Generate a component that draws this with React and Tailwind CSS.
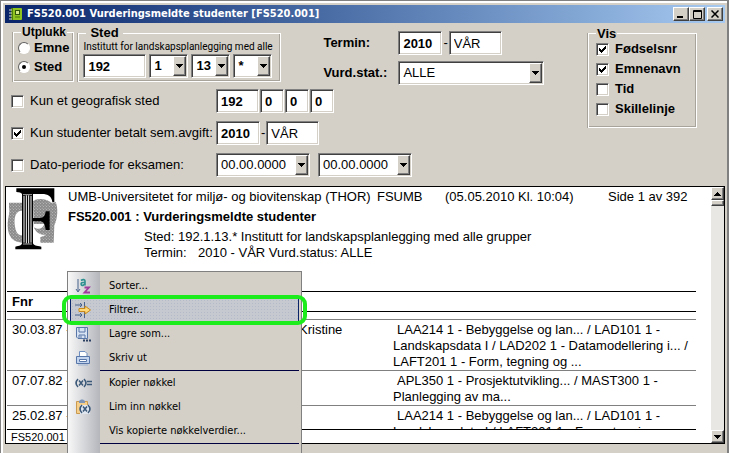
import React, { useState } from "react";

const sunken =
  "border border-t-[#808080] border-l-[#808080] border-r-white border-b-white bg-white shadow-[inset_1px_1px_0_#404040,inset_-1px_-1px_0_#d4d0c8]";
const raised =
  "border border-t-white border-l-white border-r-[#404040] border-b-[#404040] bg-[#d4d0c8] shadow-[inset_-1px_-1px_0_#808080]";
const group = "border border-white shadow-[-1px_0_0_#a8a49c,inset_-1px_-1px_0_#a8a49c]";

const rows = [
  {
    fnr: "30.03.87 -",
    name: "Kristine",
    subjects: [
      "LAA214 1 - Bebyggelse og lan... / LAD101 1 -",
      "Landskapsdata I / LAD202 1 - Datamodellering i... /",
      "LAFT201 1 - Form, tegning og ...",
    ],
  },
  {
    fnr: "07.07.82 -",
    name: "",
    subjects: [
      "APL350 1 - Prosjektutvikling... / MAST300 1 -",
      "Planlegging av ma...",
    ],
  },
  {
    fnr: "25.02.87 -",
    name: "",
    subjects: [
      "LAA214 1 - Bebyggelse og lan... / LAD101 1 -",
      "Landskapsdata I / LAFT201 1 - Form, tegning",
    ],
  },
];

const Arrow = ({ up }) => (
  <svg width="7" height="4" viewBox="0 0 7 4" shapeRendering="crispEdges">
    <path d={up ? "M0 4L3.5 0L7 4z" : "M0 0H7L3.5 4z"} fill="#000" />
  </svg>
);

const TextBox = ({ label, value, className }) => (
  <input
    type="text"
    aria-label={label}
    defaultValue={value}
    className={`h-6 px-1 ${sunken} ${className}`}
  />
);

const Select = ({ id, label, value, className }) => (
  <div className={`relative h-6 ${className}`}>
    <select
      id={id}
      aria-label={label}
      defaultValue={value}
      className={`h-full w-full appearance-none rounded-none px-1 ${sunken}`}
    >
      <option>{value}</option>
    </select>
    <span
      className={`pointer-events-none absolute top-[2px] right-[2px] bottom-[2px] flex w-[13px] items-center justify-center ${raised}`}
    >
      <Arrow />
    </span>
  </div>
);

const CheckBox = ({ label, checked, className }) => (
  <label className={`flex items-center gap-[6px] ${className || ""}`}>
    <span className="relative size-[13px] shrink-0">
      <input
        type="checkbox"
        defaultChecked={checked}
        className={`peer block size-[13px] appearance-none ${sunken}`}
      />
      <svg
        className="pointer-events-none absolute inset-0 hidden peer-checked:block"
        viewBox="0 0 13 13"
        shapeRendering="crispEdges"
      >
        <path d="M3 5L5 7L10 2V5L5 10L3 8z" fill="#000" />
      </svg>
    </span>
    {label}
  </label>
);

const Radio = ({ label, checked, onChange }) => (
  <label className="flex items-center gap-1 text-[13px] font-bold">
    <span className="relative size-3 shrink-0">
      <input
        type="radio"
        name="utplukk"
        checked={checked}
        onChange={onChange}
        className="peer block size-3 appearance-none rounded-full border border-t-[#606060] border-r-white border-b-white border-l-[#606060] bg-white"
      />
      <span className="pointer-events-none absolute top-1 left-1 hidden size-1 rounded-full bg-black peer-checked:block" />
    </span>
    {label}
  </label>
);

const BookIcon = () => (
  <svg width="14" height="14" viewBox="0 0 14 14">
    <rect x="2" y="1" width="11" height="12" rx="1" fill="#8fc31f" />
    <rect x="2" y="1" width="2" height="12" fill="#4d7d10" />
    <rect x="6" y="3" width="5" height="5" fill="#31540b" />
    <rect x="7" y="4" width="3" height="3" fill="#d7ea8a" />
    <path d="M6 10H11" stroke="#4d7d10" />
    <path d="M0 3H3M0 6H3M0 9H3M0 12H3" stroke="#d8dccb" />
  </svg>
);

const Logo = () => (
  <svg width="52" height="62" viewBox="0 0 156 186" className="mt-px shrink-0">
    <defs>
      <pattern id="grain" width="9" height="9" patternUnits="userSpaceOnUse">
        <rect width="9" height="9" fill="#8c8c8c" />
        <path d="M0 0h3v3h-3zM5 5h3v3h-3z" fill="#b4b4b4" />
      </pattern>
    </defs>
    <path
      d="M6 44H45V68C24 68 20 92 24 116C28 138 36 142 46 142V164C20 164 2 148 2 112C2 90 10 72 6 60z"
      fill="url(#grain)"
    />
    <path
      d="M78 40C90 28 122 34 132 44L146 42C154 60 152 92 142 112L140 164H100V148L118 140C98 142 84 130 80 116z"
      fill="url(#grain)"
    />
    <path d="M80 108H112C108 124 90 126 80 116z" fill="#fff" />
    <path
      d="M28 1H142V42H136C134 26 124 18 104 18H78V90H98C110 90 114 84 116 70H128V126H116C114 106 108 100 98 100H78V166C80 172 88 174 103 176V184H25V176C38 174 44 172 45 166V18C44 14 36 13 28 12z"
      fill="#000"
    />
    <path d="M51 24V164M58 22V166M65 22V166M72 24V164" stroke="#fff" strokeWidth="3" />
    <path d="M48 20H75M48 168H75" stroke="#fff" strokeWidth="2" />
  </svg>
);

const SortIcon = () => (
  <svg width="16" height="16" viewBox="0 0 16 16" fill="none">
    <path d="M3 1V13M1 11L3 14L5 11" stroke="#47628c" />
    <path d="M6 2.5C8 1 10 1.5 10 3V7.500M10 4.500H8C5.500 4.500 5.500 7.500 8 7.500L10 6" stroke="#2e9090" strokeWidth="1.600" />
    <path d="M9.500 9.500H14L9.500 14.500H15" stroke="#a03c9c" strokeWidth="1.800" />
  </svg>
);

const FilterIcon = () => (
  <svg width="16" height="16" viewBox="0 0 16 16" fill="none">
    <path d="M0 3H7M5 1L7 3L5 5M9.500 0V6M0 13H7M5 11L7 13L5 15M9.500 10V16" stroke="#47628c" />
    <path d="M4 6.500H10V4L15.500 8L10 12V9.500H4z" fill="#ffd977" stroke="#c98a1b" />
  </svg>
);

const SaveIcon = () => (
  <svg width="16" height="16" viewBox="0 0 16 16" fill="none">
    <path d="M1.500 1.500H12.500V12.500H3L1.500 11z" fill="#d6e2f2" stroke="#5877a8" />
    <path d="M4 1.500V6H10V1.500M4 12V9H10V12M6 9.500V12" stroke="#5877a8" />
    <path d="M8 14.500H10M11 14.500H13M14 14.500H16" stroke="#2b3f63" strokeWidth="2" />
  </svg>
);

const PrintIcon = () => (
  <svg width="16" height="16" viewBox="0 0 16 16" fill="none">
    <path d="M4.500 6V1.500H10L12 3.500V6" fill="#fff" stroke="#6f8fc0" />
    <path d="M1.500 6.500H14.500V13.500H1.500z" fill="#c3d5ee" stroke="#5877a8" />
    <path d="M4.500 9.500H11.500V11.500H4.500z" fill="#fff" stroke="#5877a8" />
    <path d="M3 15H13" stroke="#9fb4d4" />
  </svg>
);

const CopyKeyIcon = () => (
  <svg width="17" height="16" viewBox="0 0 17 16" fill="none" stroke="#3b5878" strokeWidth="1.500">
    <path d="M3 4C0.500 6.500 0.500 9.500 3 12M4 5.500L8 10.500M8 5.500L4 10.500M9 4C11.500 6.500 11.500 9.500 9 12" />
    <path d="M12 6.500H17M12 9.500H17" />
  </svg>
);

const PasteKeyIcon = () => (
  <svg width="17" height="16" viewBox="0 0 17 16" fill="none">
    <path d="M1.500 2.500H12.500V14.500H1.500z" fill="#f6cf8b" stroke="#c99a50" />
    <path d="M4 4V2L6 0.500H8L10 2V4z" fill="#7f95b8" />
    <path d="M5 6H15V15H5z" fill="#dfe6f0" />
    <path
      d="M7 6C4.500 8.500 4.500 11.500 7 14M8 7.500L12 12.500M12 7.500L8 12.500M13 6C15.500 8.500 15.500 11.500 13 14"
      stroke="#3b5878"
      strokeWidth="1.500"
    />
  </svg>
);

const MenuItem = ({ icon, label, marked }) => (
  <li className="relative">
    <button
      type="button"
      className={`flex h-6 w-full items-center ${
        marked
          ? "border border-[#0a246a] bg-[#c6c9cf] bg-[radial-gradient(#b4bac8_1px,transparent_1px)] bg-[size:3px_3px]"
          : "border border-transparent"
      }`}
    >
      <span className="flex w-[38px] shrink-0 pl-1">{icon}</span>
      {label}
    </button>
    {marked && (
      <span className="pointer-events-none absolute -inset-x-2 -inset-y-[3px] rounded-[9px] border-4 border-[#1cec1c]" />
    )}
  </li>
);

const Separator = () => (
  <li role="separator" className="ml-[30px] border-t border-[#000040]" />
);

const ContextMenu = () => (
  <ul className="absolute top-[84px] left-[61px] w-[235px] border border-[#808080] bg-[#d4d0c8] bg-[linear-gradient(to_right,#f8f8f8,#b4b6bc_32px,#d4d0c8_32px)] px-[2px] pt-[2px] pb-6 font-['DejaVu_Sans_Condensed','DejaVu_Sans',sans-serif] text-[11px]">
    <MenuItem icon={<SortIcon />} label="Sorter..." />
    <MenuItem icon={<FilterIcon />} label="Filtrer.." marked />
    <MenuItem icon={<SaveIcon />} label="Lagre som..." />
    <MenuItem icon={<PrintIcon />} label="Skriv ut" />
    <Separator />
    <MenuItem icon={<CopyKeyIcon />} label="Kopier nøkkel" />
    <MenuItem icon={<PasteKeyIcon />} label="Lim inn nøkkel" />
    <MenuItem label="Vis kopierte nøkkelverdier..." />
    <Separator />
  </ul>
);

const TitleBar = () => (
  <header className="flex h-[18px] shrink-0 items-center bg-gradient-to-r from-[#0a246a] to-[#a6caf0] pr-[2px] pl-1 text-white">
    <BookIcon />
    <h1 className="ml-1 flex-1 font-['DejaVu_Sans_Condensed','DejaVu_Sans',sans-serif] text-[11px] font-bold whitespace-nowrap">
      FS520.001 Vurderingsmeldte studenter [FS520.001]
    </h1>
    <button type="button" aria-label="Minimer" className={`flex h-[14px] w-4 items-center justify-center ${raised}`}>
      <svg width="8" height="8" viewBox="0 0 8 8"><path d="M0 7H6" stroke="#000" strokeWidth="2" /></svg>
    </button>
    <button type="button" aria-label="Maksimer" className={`flex h-[14px] w-4 items-center justify-center ${raised}`}>
      <svg width="9" height="9" viewBox="0 0 9 9" fill="none" stroke="#000"><path d="M0.500 0.500H8.500V8.500H0.500zM0 1.500H9" /></svg>
    </button>
    <button type="button" aria-label="Lukk" className={`ml-[2px] flex h-[14px] w-4 items-center justify-center ${raised}`}>
      <svg width="8" height="8" viewBox="0 0 8 8" stroke="#000" strokeWidth="1.500"><path d="M0.500 0.500L7.500 7.500M7.500 0.500L0.500 7.500" /></svg>
    </button>
  </header>
);

const Filters = () => {
  const [utplukk, setUtplukk] = useState("Sted");

  return (
    <section className="flex shrink-0 items-start pr-[28px] pl-[6px] text-[13px]">
      <div className="flex-1">
        <div className="flex items-start pt-[2px]">
          <fieldset className={`ml-[2px] h-[57px] w-[61px] px-1 ${group}`}>
            <legend className="ml-[3px] px-px text-[12px] leading-[14px] font-bold">Utplukk</legend>
            <div className="flex flex-col gap-[3px] pt-px leading-4">
              {["Emne", "Sted"].map((name) => (
                <Radio
                  key={name}
                  label={name}
                  checked={utplukk === name}
                  onChange={() => setUtplukk(name)}
                />
              ))}
            </div>
          </fieldset>
          <fieldset className={`ml-1 h-[57px] w-[203px] px-1 ${group}`}>
            <legend className="ml-[3px] px-1 text-[13px] leading-4 font-bold">Sted</legend>
            <p className="font-[Roboto,sans-serif] text-[10px] leading-3 whitespace-nowrap">
              Institutt for landskapsplanlegging med alle
            </p>
            <div className="mt-px flex gap-[3px] font-bold">
              <TextBox label="Institusjon" value="192" className="w-[63px]" />
              <Select label="Fakultet" value="1" className="w-[39px]" />
              <Select label="Institutt" value="13" className="w-[39px]" />
              <Select label="Gruppe" value="*" className="w-[39px]" />
            </div>
          </fieldset>
          <div className="ml-[42px] grid grid-cols-[75px_auto] items-center gap-y-[6px] pt-[6px] font-bold">
            <span>Termin:</span>
            <div className="flex items-center gap-px">
              <TextBox label="Termin år" value="2010" className="w-11" />
              <span className="font-normal">-</span>
              <TextBox label="Termin" value="VÅR" className="w-[53px] font-normal" />
            </div>
            <label htmlFor="vurdstat">Vurd.stat.:</label>
            <Select id="vurdstat" label="Vurd.stat." value="ALLE" className="w-[146px] font-normal" />
          </div>
        </div>
        <div className="mt-1 grid grid-cols-[205px_auto] items-center gap-y-2 whitespace-nowrap">
          <CheckBox label="Kun et geografisk sted" />
          <div className="flex gap-px font-bold">
            <TextBox label="Sted 1" value="192" className="w-[43px]" />
            <TextBox label="Sted 2" value="0" className="w-6" />
            <TextBox label="Sted 3" value="0" className="w-6" />
            <TextBox label="Sted 4" value="0" className="w-6" />
          </div>
          <CheckBox label="Kun studenter betalt sem.avgift:" checked />
          <div className="flex items-center gap-px">
            <TextBox label="Betalt år" value="2010" className="w-11 font-bold" />
            <span>-</span>
            <TextBox label="Betalt termin" value="VÅR" className="w-[53px]" />
          </div>
          <CheckBox label="Dato-periode for eksamen:" />
          <div className="flex gap-2">
            <Select label="Fra dato" value="00.00.0000" className="w-[94px]" />
            <Select label="Til dato" value="00.00.0000" className="w-[94px]" />
          </div>
        </div>
      </div>
      <fieldset className={`mt-[3px] h-[102px] w-[109px] px-[7px] ${group}`}>
        <legend className="px-px text-[13px] leading-[15px] font-bold">Vis</legend>
        <div className="flex flex-col gap-1 font-bold leading-4">
          <CheckBox label="Fødselsnr" checked />
          <CheckBox label="Emnenavn" checked />
          <CheckBox label="Tid" />
          <CheckBox label="Skillelinje" />
        </div>
      </fieldset>
    </section>
  );
};

const Report = () => (
  <main className="relative mt-[9px] flex min-h-0 flex-1 border border-black bg-white text-[13px]">
    <div className="flex min-w-0 flex-1 flex-col overflow-hidden pr-[15px] pl-px">
      <div className="flex h-[104px] shrink-0">
        <Logo />
        <div className="min-w-0 flex-1 pt-[2px] pl-[9px] whitespace-nowrap">
          <div className="flex leading-4">
            <span className="w-[309px]">UMB-Universitetet for miljø- og biovitenskap (THOR)</span>
            <span className="w-[68px]">FSUMB</span>
            <span className="w-[163px]">(05.05.2010 Kl. 10:04)</span>
            <span>Side 1 av 392</span>
          </div>
          <h2 className="mt-1 leading-4 font-bold">FS520.001 : Vurderingsmeldte studenter</h2>
          <div className="mt-1 pl-[76px] leading-4">
            <p>Sted: 192.1.13.* Institutt for landskapsplanlegging med alle grupper</p>
            <p className="flex">
              <span className="w-[54px]">Termin:</span>2010 - VÅR Vurd.status: ALLE
            </p>
          </div>
        </div>
      </div>
      <div className="min-h-0 flex-1 overflow-hidden">
        <table className="w-full table-fixed border-separate border-spacing-0 text-left leading-4 whitespace-nowrap">
          <thead>
            <tr>
              <th className="h-[21px] w-[292px] border-y border-black pl-[5px]">Fnr</th>
              <th className="w-[94px] border-y border-black" />
              <th className="border-y border-black" />
            </tr>
            <tr aria-hidden="true">
              <td className="h-[7px]" />
            </tr>
          </thead>
          <tbody className="align-top">
            {rows.map((row) => (
              <tr key={row.fnr}>
                <td className="border-t border-[#808080] pt-[2px] pl-[5px]">{row.fnr}</td>
                <td className="border-t border-[#808080] pt-[2px]">{row.name}</td>
                <td className="border-t border-[#808080] pt-[2px]">
                  {row.subjects.map((line, index) => (
                    <div key={index} className="first:pl-1">
                      {line}
                    </div>
                  ))}
                </td>
              </tr>
            ))}
          </tbody>
        </table>
      </div>
      <footer className="h-[14px] shrink-0 border-t border-black pl-1 text-[11px] leading-[15px]">
        FS520.001
      </footer>
    </div>
    <div className="flex w-[13px] flex-col bg-[#e9e7e3]">
      <button type="button" aria-label="Rull opp" className={`flex h-[13px] items-center justify-center ${raised}`}>
        <Arrow up />
      </button>
      <div className={`h-[6px] ${raised}`} />
      <div className="flex-1" />
      <button type="button" aria-label="Rull ned" className={`flex h-[13px] items-center justify-center ${raised}`}>
        <Arrow />
      </button>
    </div>
    <ContextMenu />
  </main>
);

const App = () => {
  return (
    <div className="flex h-screen flex-col overflow-hidden border-t border-r-2 border-l border-t-[#808080] border-r-[#808080] border-l-[#808080] bg-[#d4d0c8] pt-1 pr-[2px] pb-[9px] pl-1 font-['Liberation_Sans',Arial,sans-serif] text-black shadow-[inset_2px_2px_0_#fff]">
      <TitleBar />
      <Filters />
      <Report />
    </div>
  );
};

export default App;
